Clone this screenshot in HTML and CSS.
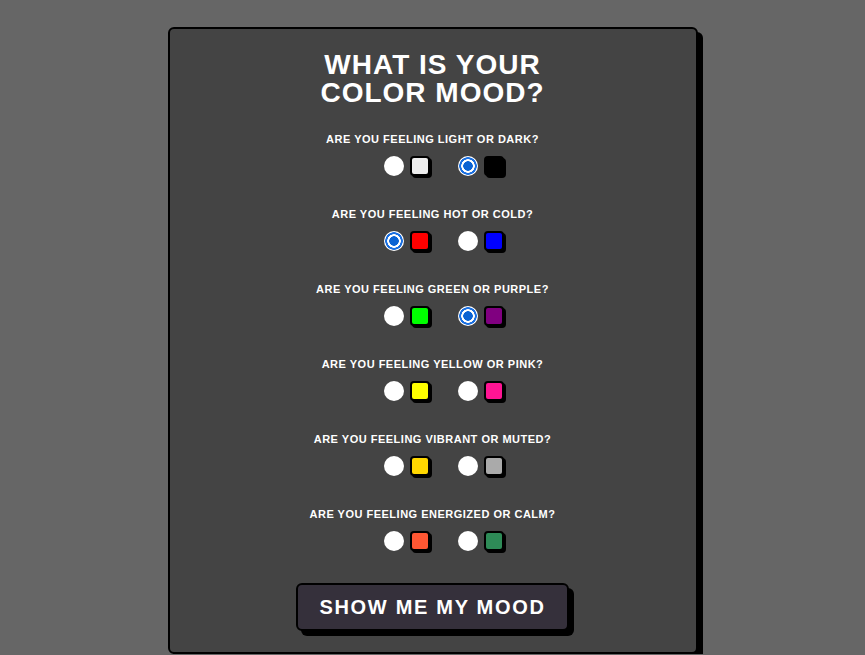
FILE: index.html
```html
<!DOCTYPE html>
<html lang="en">
<head>
  <meta charset="UTF-8">
  <meta name="viewport" content="width=device-width, initial-scale=1.0">
  <title>Color Mood</title>
  <link rel="stylesheet" href="styles.css">
</head>

<body>
  <!-- Mood quiz card -->
  <div class="card">
    <h1>What is your<br>color mood?</h1>

    <form class="quiz">
      <div class="question">
        <p>Are you feeling light or dark?</p>
        <div class="choices">
          <label><input type="radio" name="q1"><span class="swatch light"></span></label>
          <label><input type="radio" name="q1" checked><span class="swatch dark"></span></label>
        </div>
      </div>

      <div class="question">
        <p>Are you feeling hot or cold?</p>
        <div class="choices">
          <label><input type="radio" name="q2" checked><span class="swatch hot"></span></label>
          <label><input type="radio" name="q2"><span class="swatch cold"></span></label>
        </div>
      </div>

      <div class="question">
        <p>Are you feeling green or purple?</p>
        <div class="choices">
          <label><input type="radio" name="q3"><span class="swatch green"></span></label>
          <label><input type="radio" name="q3" checked><span class="swatch purple"></span></label>
        </div>
      </div>

      <div class="question">
        <p>Are you feeling yellow or pink?</p>
        <div class="choices">
          <label><input type="radio" name="q4"><span class="swatch yellow"></span></label>
          <label><input type="radio" name="q4"><span class="swatch pink"></span></label>
        </div>
      </div>

      <div class="question">
        <p>Are you feeling vibrant or muted?</p>
        <div class="choices">
          <label><input type="radio" name="q5"><span class="swatch vibrant"></span></label>
          <label><input type="radio" name="q5"><span class="swatch muted"></span></label>
        </div>
      </div>

      <div class="question">
        <p>Are you feeling energized or calm?</p>
        <div class="choices">
          <label><input type="radio" name="q6"><span class="swatch energized"></span></label>
          <label><input type="radio" name="q6"><span class="swatch calm"></span></label>
        </div>
      </div>

      <button type="button" class="mood-btn">Show me my mood</button>
    </form>
  </div>
</body>

</html>
```

FILE: styles.css
```css
* {
    box-sizing: border-box;
}
body {
    margin: 0;
    padding-top: 27px;
    background-color: #666666;
    font-family: "Liberation Sans", Arial, sans-serif;
    color: #ffffff;
}
.card {
    width: 530px;
    height: 627px;
    margin: 0 auto;
    padding: 22px 20px 19px;
    background-color: #444444;
    border: 2px solid #000;
    border-radius: 6px;
    box-shadow: 5px 5px 0 #000;
    text-align: center;
}
h1 {
    margin: 0;
    font-size: 28px;
    line-height: 28px;
    letter-spacing: 1px;
    text-transform: uppercase;
}
.quiz {
    display: flex;
    flex-direction: column;
    align-items: center;
    gap: 31px;
    margin-top: 25px;
}
/* each question: label line + two choices */
.question {
    display: flex;
    flex-direction: column;
    gap: 10px;
}
.question p {
    margin: 0;
    font-size: 11px;
    line-height: 14px;
    font-weight: bold;
    letter-spacing: 0.5px;
    text-transform: uppercase;
}
.choices {
    display: flex;
    justify-content: center;
    gap: 28px;
    padding-left: 23px;
}
.choices label {
    display: flex;
    align-items: center;
    gap: 6px;
    cursor: pointer;
}
.choices input {
    appearance: none;
    margin: 0;
    width: 20px;
    height: 20px;
    border-radius: 50%;
    background: #ffffff;
}
.choices input:checked {
    background: radial-gradient(circle, #0b63d3 0 4.5px, #ffffff 5px 6.5px, #1a6fe0 7px 8.5px, #ffffff 9px);
}
.swatch {
    width: 20px;
    height: 20px;
    border: 2px solid #000;
    border-radius: 4px;
    box-shadow: 2px 2px 0 #000;
}
.light { background: #eeeeee; }
.dark { background: #000000; }
.hot { background: #ff0000; }
.cold { background: #0000ff; }
.green { background: #00ff00; }
.purple { background: #800080; }
.yellow { background: #ffff00; }
.pink { background: #ff1493; }
.vibrant { background: #ffd700; }
.muted { background: #aaaaaa; }
.energized { background: #ff5733; }
.calm { background: #2e8b57; }

.mood-btn {
    margin-top: 1px;
    padding: 11px 21px;
    background-color: #35303b;
    color: #ffffff;
    font-family: "Liberation Sans", Arial, sans-serif;
    font-size: 20px;
    line-height: 22px;
    font-weight: bold;
    letter-spacing: 1.7px;
    text-transform: uppercase;
    border: 2px solid #000;
    border-radius: 6px;
    box-shadow: 5px 5px 0 #000;
    cursor: pointer;
}
```
